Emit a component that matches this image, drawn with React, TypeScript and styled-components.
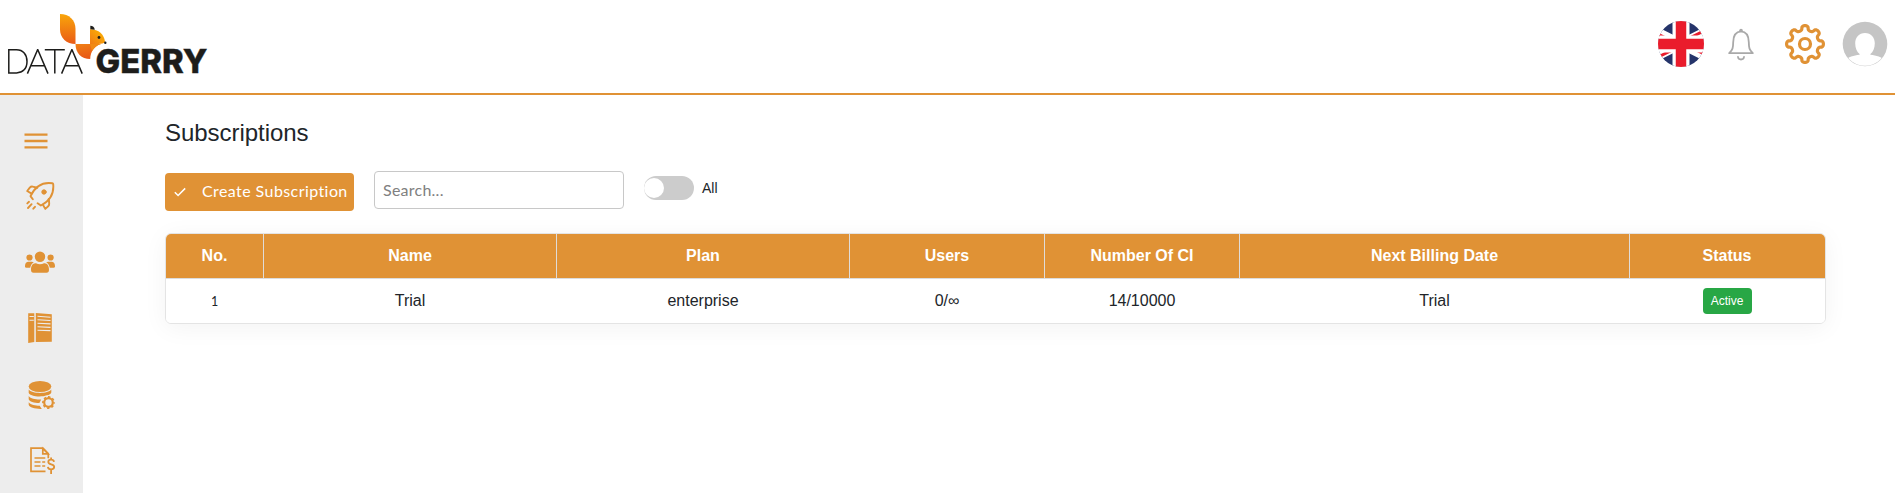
import React from 'react';
import styled, { createGlobalStyle } from 'styled-components';

const orange = '#e09235';

const GlobalStyle = createGlobalStyle`
  * { box-sizing: border-box; }
  body {
    margin: 0;
    background: #fff;
    color: #212529;
    font-family: "Liberation Sans", Arial, sans-serif;
    font-size: 16px;
    overflow: hidden;
  }
`;

const Page = styled.div`
  height: 100vh;
  display: flex;
  flex-direction: column;
`;

const TopBar = styled.header`
  height: 95px;
  flex: none;
  display: flex;
  align-items: flex-start;
  justify-content: space-between;
  border-bottom: 2px solid ${orange};
`;

const Actions = styled.div`
  display: flex;
  padding: 20px 7px 0 0;
`;

const IconSlot = styled.div<{ $gap?: number; $top?: number }>`
  margin-left: ${p => p.$gap ?? 0}px;
  margin-top: ${p => p.$top ?? 0}px;
  line-height: 0;
`;

const Body = styled.div`
  flex: 1;
  display: flex;
  min-height: 0;
`;

const SideBar = styled.nav`
  width: 83px;
  flex: none;
  background: #ededed;
  display: flex;
  flex-direction: column;
  padding: 36px 0 0 22px;
  overflow: hidden;
`;

const SideItem = styled.a<{ $space: number }>`
  height: ${p => p.$space}px;
  flex: none;
  line-height: 0;
`;

const Main = styled.main`
  flex: 1;
  padding: 23px 69px 0 82px;
`;

const Title = styled.h1`
  margin: 0;
  font-size: 24px;
  line-height: 29px;
  font-weight: 400;
  letter-spacing: -0.04px;
`;

const Tools = styled.div`
  display: flex;
  align-items: flex-start;
  margin-top: 24px;
  height: 62px;
`;

const CreateButton = styled.button`
  width: 189px;
  height: 38px;
  margin-top: 2px;
  padding: 0 0 3px 9px;
  border: 0;
  border-radius: 4px;
  background: ${orange};
  color: #fff;
  display: flex;
  align-items: center;
  font: 400 16px Lato, sans-serif;
  letter-spacing: 0.42px;
  white-space: nowrap;

  svg { margin: 2px 16px 0 0; flex: none; }
`;

const Search = styled.input`
  width: 250px;
  height: 38px;
  margin-left: 20px;
  padding: 0 8px 2px;
  border: 1px solid #c8c8c8;
  border-radius: 4px;
  font: 400 16px Lato, sans-serif;
  letter-spacing: 0.25px;
  &::placeholder { color: #808080; opacity: 1; }
`;

const Switch = styled.span`
  width: 50px;
  height: 24px;
  margin: 5px 8px 0 20px;
  padding: 2px 0;
  border-radius: 12px;
  background: #ccc;
`;

const Knob = styled.span`
  display: block;
  width: 20px;
  height: 20px;
  border-radius: 50%;
  background: #fff;
`;

const SwitchLabel = styled.span`
  margin-top: 9px;
  font-size: 14px;
  line-height: 16px;
`;

const Table = styled.div`
  border: 1px solid #e4e4e4;
  border-radius: 6px;
  overflow: hidden;
  box-shadow: 0 4px 24px rgba(0, 0, 0, 0.05);
`;

const Row = styled.div<{ $head?: boolean }>`
  display: grid;
  grid-template-columns: 98px 293px 293px 195px 195px 390px 195px;
  height: ${p => (p.$head ? 45 : 44)}px;
  background: ${p => (p.$head ? orange : '#fff')};
  color: ${p => (p.$head ? '#fff' : '#212529')};
  font-weight: ${p => (p.$head ? 700 : 400)};
  border-bottom: ${p => (p.$head ? '1px solid #dcdcdc' : '0')};
`;

const Cell = styled.div<{ $line?: boolean }>`
  display: flex;
  align-items: center;
  justify-content: center;
  border-right: 1px solid ${p => (p.$line ? '#e0dcd8' : 'transparent')};
  padding-bottom: 1px;
`;

const RowNumber = styled.span`
  font: 400 12.5px Lato, sans-serif;
  padding-top: 2px;
`;

const Badge = styled.span`
  height: 26px;
  width: 49px;
  margin-top: 1px;
  border-radius: 4px;
  background: #28a745;
  color: #fff;
  font-size: 12px;
  line-height: 26px;
  text-align: center;
`;

const Logo = () => (
  <svg width="220" height="93" viewBox="0 0 220 93">
    <defs>
      <linearGradient id="tail" x1="0" y1="0" x2="0" y2="1">
        <stop offset="0" stopColor="#f9a60a" />
        <stop offset="1" stopColor="#ea5b17" />
      </linearGradient>
      <linearGradient id="head" x1="1" y1="0" x2="0" y2="1">
        <stop offset="0" stopColor="#fdb900" />
        <stop offset="1" stopColor="#ef7b16" />
      </linearGradient>
      <linearGradient id="chest" x1="0" y1="0" x2="0.3" y2="1">
        <stop offset="0" stopColor="#f08015" />
        <stop offset="1" stopColor="#e85817" />
      </linearGradient>
    </defs>
    <path d="M60 14c9 0 15.5 6 15.5 15v15C66.500 44 60 38 60 29.500z" fill="url(#tail)" />
    <path d="M90 29.300c9 0 14 5 15 12.500-1.500 2.200-3.500 1.700-6.500 2.200H90z" fill="url(#head)" />
    <path d="M75.500 44H101c-6 1.800-10.500 7-10.800 15C81.500 59 75.500 53 75.500 44z" fill="url(#chest)" />
    <path d="M90 44h11c-4 1.200-7 3.600-9 7z" fill="#f18a14" />
    <path d="M90.300 29.200v-3.500c2.500.1 4.200 1.400 4.500 4z" fill="#1d1d1b" />
    <circle cx="99" cy="37.500" r="1.400" fill="#1d1d1b" />
    <circle cx="105.300" cy="42.800" r="1.200" fill="#1d1d1b" />
    <g fill="none" stroke="#1d1d1b" strokeWidth="1.500">
      <path d="M8.800 49.800h7.700c6.500 0 10.500 4.700 10.500 11.600 0 7.200-4.200 11.500-10.500 11.500H8.800z" />
      <path d="M27.400 73.600l10.200-23.800h.2L48 73.600M31.200 65.800h13M44.800 49.800h20M54.800 49.800v23.800M61.600 73.600l10.200-23.800h.2l10.200 23.800M65.400 65.800h13" />
    </g>
    <text x="95.500" y="73.300" fill="#1d1d1b" stroke="#1d1d1b" strokeWidth=".4" fontFamily="Inter, sans-serif" fontWeight="800" fontSize="33" textLength="112" lengthAdjust="spacingAndGlyphs">GERRY</text>
  </svg>
);

const Flag = () => (
  <svg width="48" height="48" viewBox="0 0 48 48">
    <clipPath id="disc"><circle cx="24" cy="24" r="23" /></clipPath>
    <g clipPath="url(#disc)">
      <path fill="#25346a" d="M0 0h48v48H0z" />
      <path d="M-4 10L52 38M-4 38L52 10" stroke="#fff" strokeWidth="9.600" />
      <path d="M-4 11.600L20 23.600M28 24.400l24 12M-4 39.600l24-12M28 20.400l24-12" stroke="#ea1c2c" strokeWidth="3" />
      <path d="M24 0v48M0 24h48" stroke="#fff" strokeWidth="17" />
      <path d="M24 0v48M0 24h48" stroke="#ea1c2c" strokeWidth="10.500" />
    </g>
  </svg>
);

const Bell = () => (
  <svg width="26" height="34" viewBox="0 0 26 34" fill="none" stroke="#a9a9a9" strokeWidth="1.800" strokeLinejoin="round" strokeLinecap="round">
    <path d="M1.200 25.200c3.500-3.500 3.900-5 4-11C5.300 7.500 8 3.700 13 3.400c5 .3 7.700 4.100 7.800 10.800.1 6 .5 7.500 4 11z" />
    <path d="M12 3.100c0-2 2-2 2 0M10 29c.4 3.300 5.600 3.300 6 0" />
  </svg>
);

const Gear = () => {
  const points = Array.from({ length: 192 }, (_, i) => {
    const t = (i / 192) * Math.PI * 2;
    const r = 16.1 + 2.3 * Math.cos(8 * t);
    const a = t - Math.PI / 2 + 0.045 * Math.sin(16 * t);
    return `${(20 + r * Math.cos(a)).toFixed(2)},${(20 + r * Math.sin(a)).toFixed(2)}`;
  }).join(' ');
  return (
    <svg width="40" height="40" viewBox="0 0 40 40" fill="none" stroke={orange} strokeWidth="3.200" strokeLinejoin="round">
      <polygon points={points} />
      <circle cx="20" cy="20" r="5.500" />
    </svg>
  );
};

const Avatar = () => (
  <svg width="46" height="46" viewBox="0 0 46 46">
    <clipPath id="face"><circle cx="23" cy="23" r="21.800" /></clipPath>
    <circle cx="23" cy="23" r="22.300" fill="#c5c5c5" />
    <g clipPath="url(#face)" fill="#fff">
      <path d="M23 12c6 0 9.800 4.400 9.800 10.300 0 5.200-1.800 8.700-4.400 10.800v.6c6 .8 11.300 2.200 14.800 5.800L36 46H10l-7.200-6.500c3.500-3.600 8.800-5 14.800-5.800v-.6c-2.600-2.100-4.400-5.600-4.400-10.800C13.200 16.400 17 12 23 12z" />
    </g>
  </svg>
);

const Menu = () => (
  <svg width="28" height="20" viewBox="22 131 28 20">
    <path d="M24.500 134.700h23M24.500 141h23M24.500 147.300h23" stroke={orange} strokeWidth="2.300" />
  </svg>
);

const Rocket = () => (
  <svg width="34" height="30" viewBox="22 181 34 30" fill="none" stroke={orange} strokeWidth="1.900" strokeLinecap="round" strokeLinejoin="round">
    <path d="M32.800 199.300l-2.300-3.200c3.500-7.400 10-14.600 21.800-12.900.7.100.8.300.9 1 1 10.500-4.700 17.500-12.300 21.300l-3.300-2.300" />
    <path d="M37.300 187.700l-4.700-1.100c-1.300-.2-2 .2-2.800 1.100l-2.600 3.300 4.400 2.600M48.800 199l.4 4.500c.1 1.200-.2 2-1 2.800l-2.900 2.600-2.400-4.200" />
    <path d="M29 201.800l-1.700 1.600M31.600 204.200l-3.600 3.800M35 206.800l-1.700 1.900" />
    <circle cx="44" cy="192" r="2.200" fill={orange} strokeWidth="1" />
  </svg>
);

const Users = () => (
  <svg width="36" height="26" viewBox="22 249 36 26" fill={orange}>
    <circle cx="40" cy="256.800" r="5.200" />
    <circle cx="29.500" cy="257.500" r="3.100" />
    <circle cx="50.600" cy="257.500" r="3.100" />
    <path d="M36 263.300c2.500 1.300 5.500 1.300 8 0 3-.5 5 2.500 5 6.200 0 2.300-.8 3.300-2.500 3.300h-13c-1.700 0-2.500-1-2.500-3.300 0-3.700 2-6.700 5-6.200z" />
    <path d="M28 261.800h3c1.500 0 2.200.3 2.800.8-2 1-3 2.600-3.600 5.200h-4c-1 0-1.300-.6-1.200-1.700.2-2.500 1-4.100 3-4.300zM52 261.800h-3c-1.500 0-2.200.3-2.800.8 2 1 3 2.600 3.600 5.200h4c1 0 1.300-.6 1.200-1.700-.2-2.500-1-4.100-3-4.300z" />
  </svg>
);

const Book = () => (
  <svg width="34" height="34" viewBox="22 311 34 34" fill={orange}>
    <path d="M28.200 313.200h6.100v28.700l-6.100 1zM35.800 313l16 1.300v27.500l-16 .2z" />
    <path d="M29.500 316.500h4.300M29.500 320.200h4.300M37.500 316.300l13 1M37.500 319.700l13 .8M37.500 323.200l13 .7M37.500 326.800l13 .6M37.500 330.200l13 .4" stroke="#ededed" strokeWidth="1.100" />
  </svg>
);

const Database = () => (
  <svg width="36" height="34" viewBox="22 378 36 34" fill={orange}>
    <ellipse cx="40" cy="386.500" rx="11.300" ry="5.600" />
    <path d="M28.700 389.500c3 4.500 19.600 4.500 22.600 0v3c-1.600 4.900-20.600 5.400-22.600.5zM28.700 396c2.200 3 7.500 3.600 12.500 3.400l-1.800 3.600c-5.200 0-10.200-1.400-10.700-3.800zM28.700 402.200c2.200 2.700 6.400 3.300 11 3.500l2.100 3.200c-6.500.2-12.400-1.300-13.100-4.100z" />
    <circle cx="48.500" cy="402.500" r="7.300" fill="#ededed" />
    <circle cx="48.500" cy="402.500" r="4.300" fill="none" stroke={orange} strokeWidth="2.200" />
    <circle cx="48.500" cy="402.500" r="5.600" fill="none" stroke={orange} strokeWidth="1.600" strokeDasharray="2.400 2" strokeDashoffset="1.200" />
  </svg>
);

const Invoice = () => (
  <svg width="36" height="32" viewBox="22 445 36 32" fill="none" stroke={orange} strokeWidth="1.700">
    <path d="M45.500 471.300H31V448.200h12l5.300 5.500v4.500M42.800 448.500v5.300h5.300z" />
    <path d="M34.500 458h10.800M34.500 462h6M42.200 462h3M34.500 466h6M42.200 466h3" strokeWidth="1.600" />
    <path d="M54 461.800c-.3-1.700-1.300-2.100-2.900-2.100-1.700 0-2.800.8-2.800 2.300 0 3.300 5.900 1.300 5.900 4.800 0 1.600-1.300 2.500-3.100 2.500-1.900 0-3-.8-3.200-2.500M51.100 457.500v2.500M51.100 469v5" strokeWidth="1.800" />
  </svg>
);

const Check = () => (
  <svg width="12" height="10" viewBox="0 0 12 10" fill="none" stroke="#fff" strokeWidth="1.500">
    <path d="M.8 5.200l3.300 3.300L11.200 1.400" />
  </svg>
);

const headings = ['No.', 'Name', 'Plan', 'Users', 'Number Of CI', 'Next Billing Date', 'Status'];

export default function App() {
  return (
    <Page>
      <GlobalStyle />
      <TopBar>
        <Logo />
        <Actions>
          <IconSlot><Flag /></IconSlot>
          <IconSlot $gap={23} $top={8}><Bell /></IconSlot>
          <IconSlot $gap={31} $top={4}><Gear /></IconSlot>
          <IconSlot $gap={17} $top={1}><Avatar /></IconSlot>
        </Actions>
      </TopBar>
      <Body>
        <SideBar>
          <SideItem $space={50}><Menu /></SideItem>
          <SideItem $space={68}><Rocket /></SideItem>
          <SideItem $space={62}><Users /></SideItem>
          <SideItem $space={67}><Book /></SideItem>
          <SideItem $space={67}><Database /></SideItem>
          <SideItem $space={32}><Invoice /></SideItem>
        </SideBar>
        <Main>
          <Title>Subscriptions</Title>
          <Tools>
            <CreateButton><Check />Create Subscription</CreateButton>
            <Search placeholder="Search..." />
            <Switch><Knob /></Switch>
            <SwitchLabel>All</SwitchLabel>
          </Tools>
          <Table>
            <Row $head>
              {headings.map((h, i) => (
                <Cell key={h} $line={i < headings.length - 1}>{h}</Cell>
              ))}
            </Row>
            <Row>
              <Cell><RowNumber>1</RowNumber></Cell>
              <Cell>Trial</Cell>
              <Cell>enterprise</Cell>
              <Cell>0/∞</Cell>
              <Cell>14/10000</Cell>
              <Cell>Trial</Cell>
              <Cell><Badge>Active</Badge></Cell>
            </Row>
          </Table>
        </Main>
      </Body>
    </Page>
  );
}
